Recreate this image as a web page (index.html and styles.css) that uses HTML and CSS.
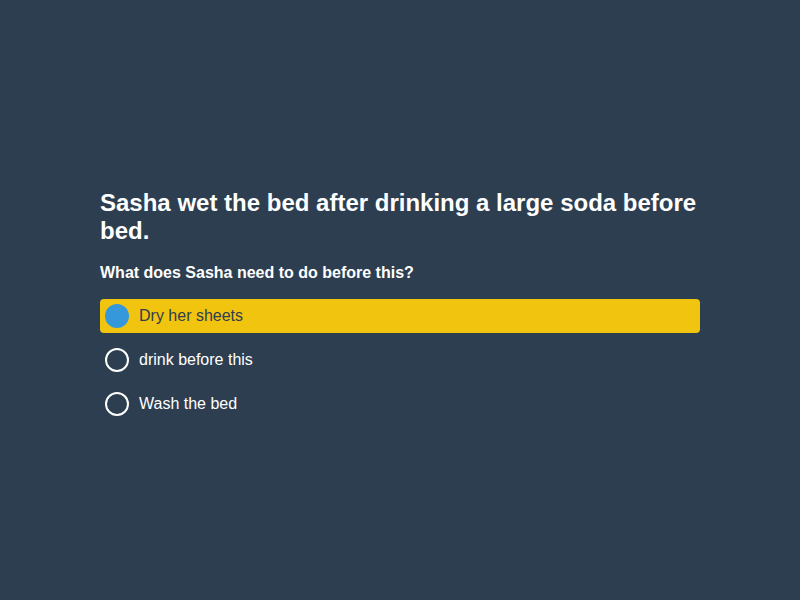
FILE: index.html
```html
<!DOCTYPE html>
<html>
<head>
<meta charset="utf-8">
<link rel="stylesheet" href="styles.css">
</head>
<body>
<main class="quiz">
  <h1 class="question">Sasha wet the bed after drinking a large soda before bed.</h1>
  <h2 class="prompt">What does Sasha need to do before this?</h2>
  <div class="options">
    <div class="option selected"><span class="radio"></span><span class="label">Dry her sheets</span></div>
    <div class="option"><span class="radio"></span><span class="label">drink before this</span></div>
    <div class="option"><span class="radio"></span><span class="label">Wash the bed</span></div>
  </div>
</main>
</body>
</html>
```
FILE: styles.css
```css
html, body {
  margin: 0;
  height: 100%;
}
body {
  background: #2c3e50;
  color: #ffffff;
  font-family: "Liberation Sans", Arial, sans-serif;
  display: flex;
  align-items: center;
  justify-content: center;
}
.quiz {
  width: 600px;
  padding-top: 10px;
}
.question {
  margin: 0 0 19px;
  font-size: 24px;
  font-weight: bold;
}
.prompt {
  margin: 0 0 17px;
  font-size: 16px;
  font-weight: bold;
}
.options {
  display: flex;
  flex-direction: column;
  gap: 10px;
}
.option {
  height: 34px;
  display: flex;
  align-items: center;
  gap: 10px;
  padding: 0 5px;
  border-radius: 4px;
  font-size: 16px;
}
.radio {
  width: 20px;
  height: 20px;
  border: 2px solid #ffffff;
  border-radius: 50%;
  flex: none;
}
.option.selected {
  background: #f1c40f;
  color: #2c3e50;
}
.option.selected .radio {
  background: #3498db;
  border-color: #3498db;
}
```
